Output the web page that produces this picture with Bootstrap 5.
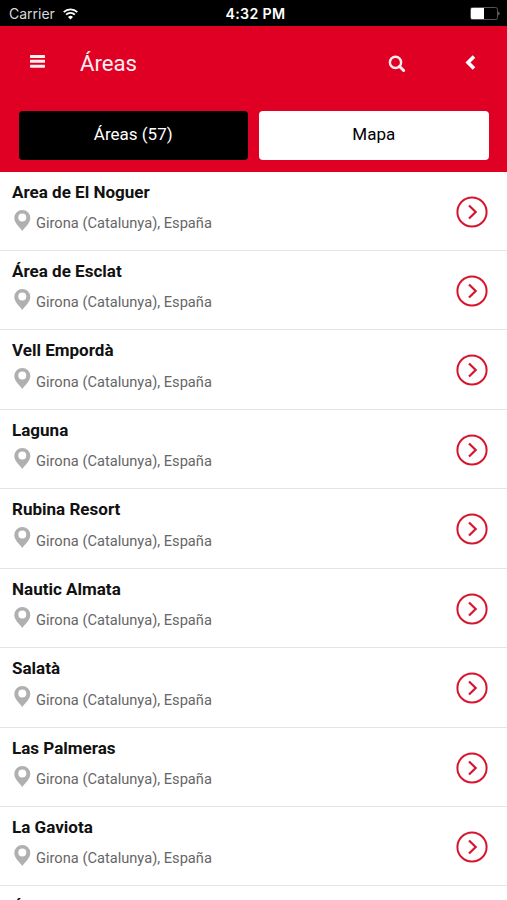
<!DOCTYPE html>
<html lang="es">
<head>
<meta charset="utf-8">
<meta name="viewport" content="width=device-width, initial-scale=1">
<title>Áreas</title>
<link href="https://cdn.jsdelivr.net/npm/bootstrap@5.3.0/dist/css/bootstrap.min.css" rel="stylesheet">
<style>
body{font-family:Roboto,"Liberation Sans",sans-serif;height:900px;color:#111}
svg{display:block;flex:none}
.status-bar{height:25.5px;background:#000;font:14.2px/26px Inter,sans-serif;display:grid;grid-template-columns:1fr auto 1fr;padding:0 7px 0 9px}
.status-carrier{color:#d8d8d8;font-size:14px}
.status-time{font-weight:600;letter-spacing:.35px;padding-left:2px;line-height:27px}
.app-head{height:146px;background:#df0024}
.app-bar{height:75px;padding:0 31px 0 29px}
.app-title{font-size:22.2px;line-height:30px;color:#ffeef0;margin-left:34px;font-weight:400}
.switcher{padding:10.5px 18.5px 0;gap:11px}
.switcher .btn{height:49px;border:0;border-radius:4px;font-size:17px;line-height:25px;padding:0 0 2px}
.area-list{height:728.5px}
.area-row{height:79.45px;flex:none;border:0;border-bottom:2px solid #e4e4e4;border-radius:0!important;padding:9.1px 19px 0 12px}
.area-name{font-size:17.05px;line-height:22px;font-weight:700;color:#111}
.area-pin{margin-top:3px}
.area-place{font-size:14.65px;line-height:22px;color:#666;padding-top:5.3px}
.area-go{margin-top:15px}
</style>
</head>
<body class="bg-white overflow-hidden">
<div class="status-bar text-white">
  <div class="status-carrier d-flex align-items-center"><span>Carrier</span>
    <svg class="ms-2" width="15" height="12" viewBox="0 0 15 12" fill="none" stroke="#fff" stroke-width="1.8"><path d="M.7 4.2a9.7 9.7 0 0 1 13.6 0M3.1 6.7a6.2 6.2 0 0 1 8.8 0"/><path d="M7.5 11.5 5 9a3.6 3.6 0 0 1 5 0z" fill="#fff" stroke="none"/></svg></div>
  <div class="status-time">4:32 PM</div>
  <div class="d-flex align-items-center justify-content-end"><svg width="30" height="13" viewBox="0 0 30 13"><rect x=".5" y=".5" width="27" height="12" rx="2" fill="none" stroke="#555"/><path d="M2 1h12v11H2q-1 0-1-1V2q0-1 1-1z" fill="#fff"/><path d="M28.5 4.5q1.800 2 0 4z" fill="#bbb"/></svg></div>
</div>
<header class="app-head">
  <div class="app-bar d-flex align-items-center">
    <svg width="17" height="16" viewBox="0 0 17 16" fill="#ffeef0"><rect x="1" width="15" height="3" rx=".6" y="0"/><rect x="1" y="4.800" width="15" height="3" rx=".6"/><rect x="1" y="9.700" width="15" height="3" rx=".6"/></svg>
    <h1 class="app-title mb-0">Áreas</h1>
    <svg class="ms-auto" width="20" height="18" viewBox="0 0 20 18" fill="none" stroke="#ffeef0" stroke-width="2.4"><circle cx="9.500" cy="8.400" r="5.600"/><path d="m13.600 12.500 4 4" stroke-width="3" stroke-linecap="round"/></svg>
    <svg class="ms-5" width="22" height="18" viewBox="0 0 22 18" fill="none" stroke="#fff" stroke-width="3.6"><path d="m20 2.500-6 6 6 6"/></svg>
  </div>
  <div class="switcher d-flex"><button class="btn btn-dark bg-black flex-fill w-50">Áreas (57)</button><button class="btn btn-light bg-white flex-fill w-50">Mapa</button></div>
</header>
<svg class="d-none"><defs>
  <g id="pin"><path fill="#b0b0b0" fill-rule="evenodd" d="M8.300 0A8 8 0 0 0 .3 8c0 4.800 4.700 8.600 8 13 3.300-4.400 8-8.200 8-13A8 8 0 0 0 8.300 0zm0 3.600a4 4 0 1 1 0 8 4 4 0 0 1 0-8z"/></g>
  <g id="go" fill="none" stroke="#d8142c" stroke-width="2"><circle cx="16" cy="16" r="14.600"/><path d="m13 9.500 6.700 6.500-6.700 6.500" stroke-width="2.200"/></g>
</defs></svg>
<main class="list-group list-group-flush area-list overflow-hidden" id="areas"></main>
<script>
const names=["Area de El Noguer","Área de Esclat","Vell Empordà","Laguna","Rubina Resort","Nautic Almata","Salatà","Las Palmeras","La Gaviota","Área f"];
document.getElementById("areas").innerHTML=names.map(n=>`<div class="list-group-item area-row d-flex justify-content-between">
<div><div class="area-name">${n}</div><div class="d-flex mt-1"><svg class="area-pin me-1" width="20" height="22" viewBox="-2 0 20 22"><use href="#pin"/></svg><div class="area-place">Girona (Catalunya), España</div></div></div>
<svg class="area-go" width="32" height="32"><use href="#go"/></svg></div>`).join("");
</script>
<script src="https://cdn.jsdelivr.net/npm/bootstrap@5.3.0/dist/js/bootstrap.bundle.min.js"></script>
</body>
</html>
